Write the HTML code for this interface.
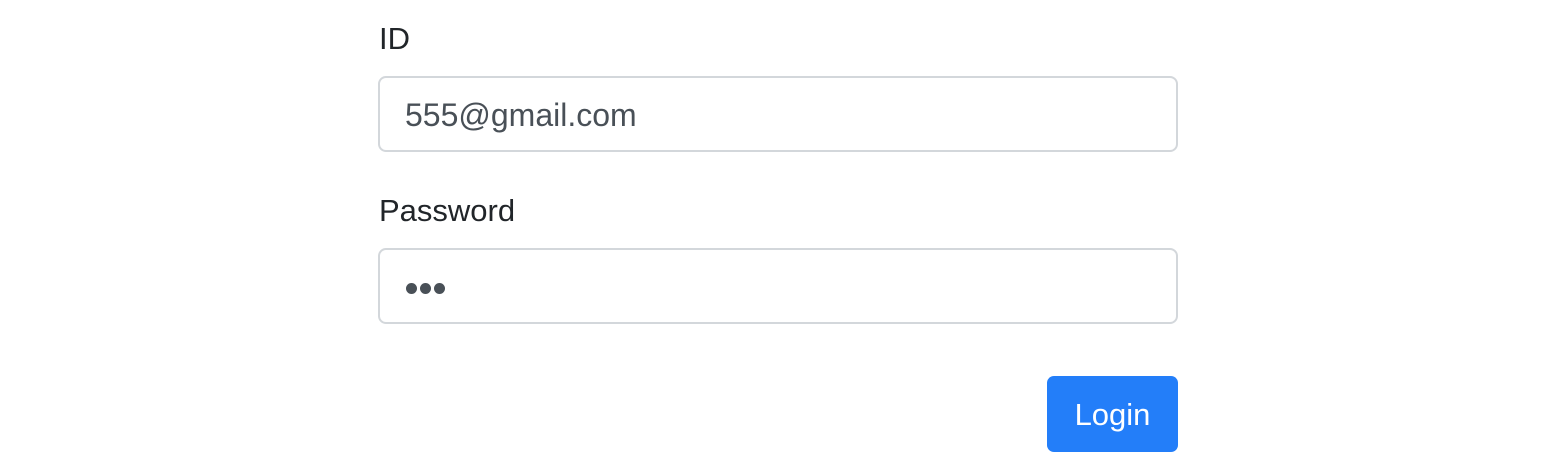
<!DOCTYPE html>
<html><head><style>
body{margin:0;width:1556px;height:476px;background:#fff;font-family:"Liberation Sans",Arial,sans-serif;position:relative;overflow:hidden}
.lbl{position:absolute;left:379px;font-size:31px;color:#212529;line-height:36px}
.inp{position:absolute;left:378px;width:796px;height:72px;border:2px solid #d3d7db;border-radius:8px;box-sizing:content-box}
.txt{position:absolute;left:25px;top:18px;font-size:32px;color:#495057;line-height:38px}
.dot{position:absolute;top:33px;width:11px;height:11px;border-radius:50%;background:#495057}
.btn{position:absolute;left:1047px;top:376px;width:131px;height:76px;background:#237ef9;border-radius:7px;color:#fff;font-size:31px;text-align:center;line-height:78px}
</style></head><body>
<div class="lbl" style="top:21px">ID</div>
<div class="inp" style="top:76px"><div class="txt">555@gmail.com</div></div>
<div class="lbl" style="top:193px">Password</div>
<div class="inp" style="top:248px">
<div class="dot" style="left:26px"></div><div class="dot" style="left:40px"></div><div class="dot" style="left:54px"></div>
</div>
<div class="btn">Login</div>
</body></html>
